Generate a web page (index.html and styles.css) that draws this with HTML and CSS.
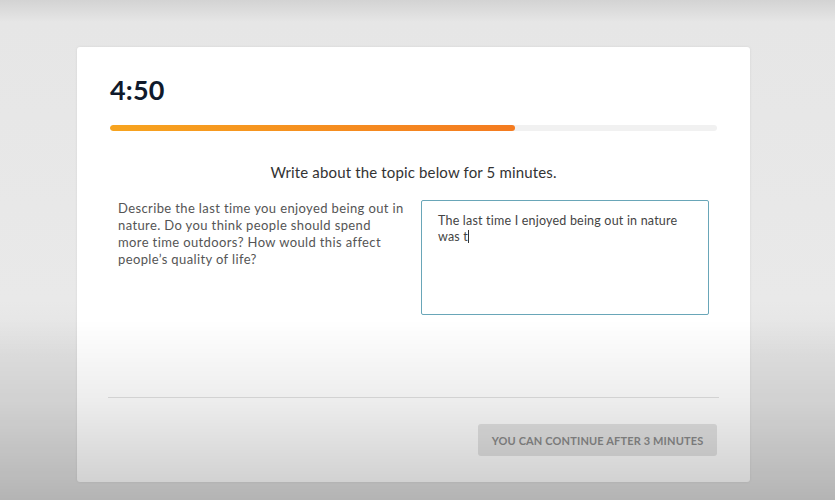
FILE: index.html
```html
<!DOCTYPE html>
<html lang="en">
<head>
<meta charset="utf-8">
<title>Writing sample</title>
<link rel="stylesheet" href="styles.css">
</head>
<body>
<main class="card">
  <div class="timer">4:50</div>
  <div class="progress"><div class="progress-fill" style="width: 66.7%"></div></div>
  <p class="instruction">Write about the topic below for 5 minutes.</p>
  <section class="task">
    <p class="prompt">Describe the last time you enjoyed being out in<br>nature. Do you think people should spend<br>more time outdoors? How would this affect<br>people’s quality of life?</p>
    <div class="answer">The last time I enjoyed being out in nature was t<span class="caret"></span></div>
  </section>
  <hr class="divider">
  <div class="actions">
    <button class="continue" disabled>You can continue after 3 minutes</button>
  </div>
</main>
</body>
</html>
```

FILE: styles.css
```css
html, body {
  margin: 0;
  height: 100%;
}

body {
  background: linear-gradient(#d3d3d3 0px, #e6e6e6 22px, #e9e9e9 300px, #e2e2e2 360px);
  font-family: Lato, "Open Sans", sans-serif;
  overflow: hidden;
}

/* soft darkening toward the bottom of the viewport */
body::after {
  content: "";
  position: fixed;
  inset: 0;
  pointer-events: none;
  background: linear-gradient(rgba(0,0,0,0) 0%, rgba(0,0,0,0) 64%, rgba(0,0,0,0.07) 80%, rgba(0,0,0,0.2) 100%);
}

.card {
  box-sizing: border-box;
  width: 673px;
  height: 435px;
  margin: 47px 0 0 77px;
  padding: 27px 33px 0;
  background: #fff;
  border-radius: 3px;
  box-shadow: 0 0 3px rgba(0,0,0,0.08);
  display: flex;
  flex-direction: column;
}

.timer {
  font-size: 27px;
  font-weight: 700;
  color: #101a2c;
  line-height: 32px;
  letter-spacing: 0.2px;
}

.progress {
  margin-top: 19px;
  height: 6px;
  border-radius: 3px;
  background: #f1f1f1;
  overflow: hidden;
}

.progress-fill {
  height: 100%;
  border-radius: 3px;
  background: linear-gradient(90deg, #f7a41f, #f47b20);
}

.instruction {
  margin: 31px 0 0;
  text-align: center;
  font-size: 15px;
  line-height: 20px;
  letter-spacing: 0.15px;
  color: #333;
}

.task {
  display: grid;
  grid-template-columns: 1fr 288px;
  column-gap: 15px;
  padding: 0 8px;
  margin-top: 18px;
}

.prompt {
  margin: 0;
  font-size: 13px;
  line-height: 17px;
  letter-spacing: 0.38px;
  color: #555;
  white-space: nowrap;
}

.answer {
  box-sizing: border-box;
  height: 115px;
  border: 1px solid #69a6b8;
  border-radius: 2px;
  padding: 12px 16px;
  font-size: 12.5px;
  line-height: 16px;
  letter-spacing: 0.2px;
  color: #444;
}

.caret {
  display: inline-block;
  width: 1px;
  height: 13px;
  background: #333;
  vertical-align: -2px;
}

.divider {
  margin: 82px -2px 0;
  border: 0;
  border-top: 1px solid #e2e2e2;
}

.actions {
  display: flex;
  justify-content: flex-end;
  margin-top: 26px;
}

.continue {
  width: 239px;
  height: 32px;
  border: 0;
  border-radius: 3px;
  background: #e5e5e5;
  color: #8c8c8c;
  font-family: Lato, "Open Sans", sans-serif;
  font-size: 11px;
  font-weight: 700;
  letter-spacing: 0.15px;
  text-transform: uppercase;
}
```
